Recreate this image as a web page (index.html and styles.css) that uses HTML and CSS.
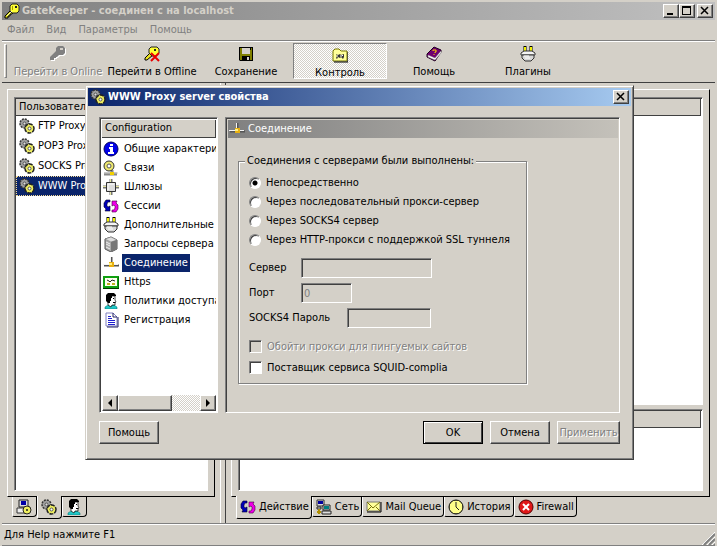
FILE: index.html
```html
<!DOCTYPE html>
<html lang="ru">
  <head>
    <meta charset="utf-8" />
    <title>GateKeeper</title>
    <link rel="stylesheet" href="styles.css">
  </head>
  <body>
    <!-- icons -->
    <svg class="sprite" aria-hidden="true">
      <symbol id="key" viewBox="0 0 16 16">
        <path d="M7 7L1 13v2h3v-2h2v-2h2l2-2z" fill="#dede18" stroke="#000" stroke-width="1"/>
        <path d="M8 1h5l2 2v5l-2 2H8L6 8V3z" fill="#ff3" stroke="#222" stroke-width="1"/>
        <path d="M8 8L3 13" stroke="#ffffb0" stroke-width="1"/>
        <path d="M11 3h2v2h-2z" fill="#222"/>
        <path d="M8.500 3v4M8 5h1" stroke="#a8a000" stroke-width="1"/>
      </symbol>
      <symbol id="key-off" viewBox="0 0 16 16">
        <path d="M9 1h5l2 2v5l-2 2h-4l-2 2H7v1H5v2H1v-3l6-6V3z" fill="#fff"/>
        <path d="M8 0h5l2 2v5l-2 2H9l-2 2H6v1H4v2H0v-3l6-6V2z" fill="#808080"/>
        <path d="M10 2h3v2h-3z" fill="#d4d0c8"/>
      </symbol>
      <symbol id="key-x" viewBox="0 0 16 16">
        <path d="M6 7L1 12v2h2l6-5z" fill="#e8e020" stroke="#000"/>
        <path d="M7 1h6l2 2v4l-3 3H8L5 7V3z" fill="#ff3" stroke="#222"/>
        <path d="M10 3h2v2h-2z" fill="#222"/>
        <path d="M7 7l8 8M15 7l-8 8" stroke="#e80000" stroke-width="2"/>
      </symbol>
      <symbol id="save" viewBox="0 0 16 16">
        <path d="M1 1h14v14H2l-1-1z" fill="#000"/>
        <path d="M2 2h2v6h8V4h1V2h1v12h-2v-4H4v4H2z" fill="#808000"/>
        <path d="M4 2h8v6H4zM9 11h2v3H9z" fill="#d4d0c8"/>
      </symbol>
      <symbol id="folder" viewBox="0 0 16 16">
        <path d="M1 14V4l2-2h4l2 2h6v10z" fill="#ff9" stroke="#777700"/>
        <path d="M2 15h14V5" fill="none" stroke="#000"/>
        <path d="M4 7l2 1 2-1 1 1 3-1v3l-1 2-2-2-1 1-2-1-1 2-1-1 1-2z" fill="#333"/>
        <path d="M8 9h2M5 9h1M10 8l1 1" stroke="#fff"/>
      </symbol>
      <symbol id="book" viewBox="0 0 16 16">
        <path d="M1 8L8 1l7 3v2l-6 9-8-4z" fill="#700070" stroke="#200020"/>
        <path d="M2 9l7 3 6-7v2l-6 7-7-3z" fill="#fff" stroke="#888" stroke-width=".5"/>
        <path d="M7 5V4h3v2H9v1M8 8v1" fill="none" stroke="#ffcf00"/>
      </symbol>
      <symbol id="plug" viewBox="0 0 16 16">
        <path d="M5 0v7M11 0v7" stroke="#000" stroke-width="3"/>
        <path d="M5 1v5M11 1v5" stroke="#f0f000" stroke-width="2"/>
        <path d="M1 7l3-2h8l3 2v2H1z" fill="#f4f4f4" stroke="#333"/>
        <path d="M2 9h12v3l-3 3H5l-3-3z" fill="#d8d8d8" stroke="#333"/>
        <path d="M4 10h5M5 12h5" stroke="#fff"/>
      </symbol>
      <symbol id="gears" viewBox="0 0 16 16">
        <circle cx="5.500" cy="5.500" r="4.500" fill="#a0a0a0" stroke="#333" stroke-width="1.500" stroke-dasharray="2 1"/>
        <circle cx="5.500" cy="5.500" r="1.500" fill="#ddd" stroke="#555"/>
        <circle cx="10.500" cy="10.500" r="4.500" fill="#eeee60" stroke="#222" stroke-width="1.500" stroke-dasharray="4 1"/>
        <circle cx="10.500" cy="10.500" r="1.500" fill="#fff" stroke="#555"/>
      </symbol>
      <symbol id="info" viewBox="0 0 16 16">
        <circle cx="8" cy="8" r="7" fill="#0000e8" stroke="#000060"/>
        <path d="M7 3h3v2H7zM6 6h4v5h1v2H5v-2h2V8H6z" fill="#fff"/>
      </symbol>
      <symbol id="links" viewBox="0 0 16 16">
        <path d="M1 14h13M9 10v3" stroke="#888" stroke-width="3"/>
        <path d="M1 13h14" stroke="#ccc"/>
        <circle cx="6" cy="6" r="5" fill="#eee870" stroke="#333"/>
        <circle cx="6" cy="6" r="2" fill="#fff" stroke="#555"/>
        <path d="M7 12h4v3H7z" fill="#f2d000"/>
      </symbol>
      <symbol id="gateway" viewBox="0 0 16 16">
        <path d="M8 0v16" stroke="#777" stroke-width="3"/>
        <path d="M0 8h16" stroke="#777" stroke-width="3"/>
        <path d="M7.500 0v16M0 7.500h16" stroke="#e8e8a0"/>
        <path d="M3.500 3.500h9v9h-9z" fill="#ddd" stroke="#333"/>
        <path d="M5 11V5h6" fill="none" stroke="#fff"/>
      </symbol>
      <symbol id="sessions" viewBox="0 0 16 16">
        <path d="M7 2H3L1 5v4l2 2-1 2h5V8L5 9 4 8V6l1-2h2z" fill="#0000b8" stroke="#000028" stroke-width=".6"/>
        <path d="M9 14h4l2-3V7l-2-2 1-2H9v5l2-1 1 1v2l-1 2H9z" fill="#f000e8" stroke="#400040" stroke-width=".6"/>
      </symbol>
      <symbol id="server" viewBox="0 0 16 16">
        <path d="M2 3l6-2 6 3v9l-6 3-6-3z" fill="#aaa" stroke="#555"/>
        <path d="M2 3l6-2 6 3-6 2z" fill="#ddd" stroke="#777" stroke-width=".5"/>
        <path d="M8 6l6-2v9l-6 3z" fill="#777"/>
        <path d="M3 6l4 2M3 8l4 2M3 11l4 2" stroke="#eee"/>
      </symbol>
      <symbol id="wire" viewBox="0 0 16 16">
        <path d="M8.500 2v8M1 10.500h15" stroke="#555" stroke-width="2"/>
        <path d="M7.500 2v8M0 9.500h15" stroke="#f4f4f4"/>
        <path d="M6 7h5v5H6z" fill="#e8b010"/>
        <path d="M6 8h3v2H6z" fill="#fff080"/>
      </symbol>
      <symbol id="cert" viewBox="0 0 16 16">
        <path d="M1 3h14v10H1z" fill="#fffff0" stroke="#10a010" stroke-width="2"/>
        <path d="M0 14.500h16V3" fill="none" stroke="#003800"/>
        <path d="M4 6l2 1 1 1 2-2 3 1" fill="none" stroke="#222"/>
        <path d="M4 10h3M9 10h3" stroke="#c0b020" stroke-width="2"/>
      </symbol>
      <symbol id="person" viewBox="0 0 16 16">
        <path d="M2 16v-2l3-2h6l3 2v2z" fill="#20c8c8" stroke="#066" stroke-width=".5"/>
        <path d="M5 3h7v4l1 2-1 1v2H9l-1 2-3-2z" fill="#fff" stroke="#000" stroke-width=".7"/>
        <path d="M3 2l2-2h6l2 2v1H9v2H8v3H7v2H5L3 8z" fill="#000"/>
        <path d="M10 5h1v1h-1zM10 9h2v1h-2z" fill="#000"/>
      </symbol>
      <symbol id="doc" viewBox="0 0 16 16">
        <path d="M3 1h7l4 4v9H3z" fill="#fff" stroke="#8080c0"/>
        <path d="M10 1v4h4M4 15h11V5" fill="none" stroke="#202060"/>
        <path d="M5 4.500h3M5 6.500h4M5 8.500h7M5 10.500h7M5 12.500h7" stroke="#2020d0"/>
      </symbol>
      <symbol id="pcgear" viewBox="0 0 16 16">
        <path d="M3 1h9v7H3z" fill="#ddd" stroke="#222"/>
        <path d="M5 2h5v4H5z" fill="#0000a8"/>
        <path d="M1 9h9v5H1z" fill="#eee" stroke="#333"/>
        <circle cx="11" cy="11" r="4" fill="#eeee60" stroke="#222"/>
        <circle cx="11" cy="11" r="1" fill="#222"/>
      </symbol>
      <symbol id="net" viewBox="0 0 16 16">
        <path d="M1 1h7v6H1z" fill="#ddd" stroke="#333"/>
        <path d="M2 2h5v3H2z" fill="#0000a0"/>
        <path d="M7 6h7v5H7z" fill="#ddd" stroke="#222"/>
        <path d="M8 7h5v3H8z" fill="#008080"/>
        <path d="M6 12h9v3H6zM1 8h4v2H1z" fill="#ddd" stroke="#222"/>
        <path d="M3 10v5M1 13h4" stroke="#b09000" stroke-width="2"/>
      </symbol>
      <symbol id="mail" viewBox="0 0 16 16">
        <path d="M1 3h13v9H1z" fill="#ff9" stroke="#777"/>
        <path d="M1 3l6 6 7-6M1 12l4-4M14 12l-4-4" fill="none" stroke="#77700a"/>
        <path d="M1 13h14V3" fill="none" stroke="#000"/>
      </symbol>
      <symbol id="clock" viewBox="0 0 16 16">
        <circle cx="8" cy="8" r="7" fill="#ff8" stroke="#000"/>
        <path d="M8 3v5l3 3M8 1v1M8 14v1M1 8h1M14 8h1" fill="none" stroke="#222"/>
      </symbol>
      <symbol id="stop" viewBox="0 0 16 16">
        <circle cx="8" cy="8" r="7" fill="#e01818" stroke="#500"/>
        <path d="M5 5l6 6M11 5l-6 6" stroke="#fff" stroke-width="2"/>
      </symbol>
      <symbol id="close" viewBox="0 0 10 10">
        <path d="M1 1l7 7M8 1l-7 7" stroke="#000" stroke-width="1.500"/>
      </symbol>
    </svg>

    <div class="window">
      <div class="titlebar">
        <svg class="icon"><use href="#key"/></svg>
        <span class="title">GateKeeper - соединен с на localhost</span>
        <button class="caption" aria-label="Свернуть"><svg viewBox="0 0 10 10"><path d="M1 7h6v2H1z"/></svg></button>
        <button class="caption" aria-label="Развернуть"><svg viewBox="0 0 10 10"><path d="M0 0h9v9H0zM1 2v6h7V2z" fill-rule="evenodd"/></svg></button>
        <button class="caption caption-close" aria-label="Закрыть"><svg><use href="#close"/></svg></button>
      </div>

      <nav class="menu">
        <button>Файл</button>
        <button>Вид</button>
        <button>Параметры</button>
        <button>Помощь</button>
      </nav>

      <div class="toolbar">
        <div class="grip"></div>
        <button class="tool" disabled><svg class="icon"><use href="#key-off"/></svg>Перейти в Online</button>
        <button class="tool"><svg class="icon"><use href="#key-x"/></svg>Перейти в Offline</button>
        <button class="tool"><svg class="icon"><use href="#save"/></svg>Сохранение</button>
        <button class="tool pressed"><svg class="icon"><use href="#folder"/></svg>Контроль</button>
        <button class="tool"><svg class="icon"><use href="#book"/></svg>Помощь</button>
        <button class="tool"><svg class="icon"><use href="#plug"/></svg>Плагины</button>
      </div>

      <main class="work">
        <section class="side">
          <div class="frame">
            <div class="list">
              <div class="list-head">Пользователи</div>
              <ul class="users">
                <li><svg class="icon"><use href="#gears"/></svg><span>FTP Proxy</span></li>
                <li><svg class="icon"><use href="#gears"/></svg><span>POP3 Proxy</span></li>
                <li><svg class="icon"><use href="#gears"/></svg><span>SOCKS Proxy</span></li>
                <li class="selected"><svg class="icon"><use href="#gears"/></svg><span>WWW Proxy</span></li>
              </ul>
            </div>
          </div>
          <div class="tabs">
            <button class="tab" aria-label="Компьютеры"><svg class="icon"><use href="#pcgear"/></svg></button>
            <button class="tab active" aria-label="Сервисы"><svg class="icon"><use href="#gears"/></svg></button>
            <button class="tab" aria-label="Пользователи"><svg class="icon"><use href="#person"/></svg></button>
          </div>
        </section>

        <div class="splitter"></div>

        <section class="content">
          <div class="frame">
            <div class="list list-top"><div class="list-head"></div></div>
            <div class="list list-bottom"><div class="list-head"></div></div>
          </div>
          <div class="tabs">
            <button class="tab active"><svg class="icon"><use href="#sessions"/></svg>Действие</button>
            <button class="tab"><svg class="icon"><use href="#net"/></svg>Сеть</button>
            <button class="tab"><svg class="icon"><use href="#mail"/></svg>Mail Queue</button>
            <button class="tab"><svg class="icon"><use href="#clock"/></svg>История</button>
            <button class="tab"><svg class="icon"><use href="#stop"/></svg>Firewall</button>
          </div>
        </section>
      </main>

      <footer class="status">
        <span>Для Help нажмите F1</span>
        <svg class="resize" viewBox="0 0 13 13">
          <path d="M0 13L13 0M5 13l8-8M10 13l3-3" stroke="#fff"/>
          <path d="M2 13L13 2M7 13l6-6M12 13l1-1" stroke="#808080" stroke-width="2"/>
        </svg>
      </footer>
    </div>

    <!-- properties dialog -->
    <form class="dialog" role="dialog" aria-labelledby="dialog-title">
      <div class="dialog-title">
        <svg class="icon"><use href="#gears"/></svg>
        <span class="title" id="dialog-title">WWW Proxy server свойства</span>
        <button type="button" class="caption" aria-label="Закрыть"><svg><use href="#close"/></svg></button>
      </div>

      <div class="dialog-body">
        <div class="config">
          <div class="list-head">Configuration</div>
          <ul class="pages">
            <li><svg class="icon"><use href="#info"/></svg><span>Общие характеристики</span></li>
            <li><svg class="icon"><use href="#links"/></svg><span>Связи</span></li>
            <li><svg class="icon"><use href="#gateway"/></svg><span>Шлюзы</span></li>
            <li><svg class="icon"><use href="#sessions"/></svg><span>Сессии</span></li>
            <li><svg class="icon"><use href="#plug"/></svg><span>Дополнительные настройки</span></li>
            <li><svg class="icon"><use href="#server"/></svg><span>Запросы сервера</span></li>
            <li class="selected"><svg class="icon"><use href="#wire"/></svg><span>Соединение</span></li>
            <li><svg class="icon"><use href="#cert"/></svg><span>Https</span></li>
            <li><svg class="icon"><use href="#person"/></svg><span>Политики доступа</span></li>
            <li><svg class="icon"><use href="#doc"/></svg><span>Регистрация</span></li>
          </ul>
          <div class="scrollbar">
            <button type="button" aria-label="Влево"><svg viewBox="0 0 8 8"><path d="M6 0v8L2 4z"/></svg></button>
            <div class="thumb"></div>
            <div class="track"></div>
            <button type="button" aria-label="Вправо"><svg viewBox="0 0 8 8"><path d="M2 0v8l4-4z"/></svg></button>
          </div>
        </div>

        <div class="page">
          <div class="page-head"><svg class="icon"><use href="#wire"/></svg>Соединение</div>
          <fieldset class="group">
            <legend>Соединения с серверами были выполнены:</legend>
            <label class="choice"><input type="radio" name="mode" checked />Непосредственно</label>
            <label class="choice"><input type="radio" name="mode" />Через последовательный прокси-сервер</label>
            <label class="choice"><input type="radio" name="mode" />Через SOCKS4 сервер</label>
            <label class="choice"><input type="radio" name="mode" />Через HTTP-прокси с поддержкой SSL туннеля</label>
            <div class="fields">
              <div class="field"><label for="server-name">Сервер</label><input type="text" id="server-name" class="wide" disabled /></div>
              <div class="field"><label for="port">Порт</label><input type="text" id="port" class="short" value="0" disabled /></div>
              <div class="field field-pass"><label for="pass">SOCKS4 Пароль</label><input type="text" id="pass" class="medium" disabled /></div>
            </div>
            <label class="check disabled"><input type="checkbox" disabled />Обойти прокси для пингуемых сайтов</label>
            <label class="check"><input type="checkbox" />Поставщик сервиса SQUID-complia</label>
          </fieldset>
        </div>
      </div>

      <div class="actions">
        <button type="button" class="btn help">Помощь</button>
        <button type="button" class="btn default">OK</button>
        <button type="button" class="btn">Отмена</button>
        <button type="button" class="btn apply" disabled>Применить</button>
      </div>
    </form>
  </body>
</html>
```
FILE: styles.css
```css
* {
  box-sizing: border-box;
}
body {
  margin: 0;
  background-color: #d4d0c8;
  color: #000;
  font: 11px/14px "DejaVu Sans Condensed", Tahoma, "DejaVu Sans", sans-serif;
}
button,
input {
  font: inherit;
  color: inherit;
  padding: 0;
  margin: 0;
}
ul {
  list-style: none;
  margin: 0;
  padding: 0;
}
.sprite {
  display: none;
}
.icon {
  width: 16px;
  height: 16px;
  flex: none;
}

/* main window */
.window {
  display: flex;
  flex-direction: column;
  height: 100vh;
  padding: 2px 2px 0;
  overflow: hidden;
}
.titlebar {
  display: flex;
  align-items: center;
  height: 18px;
  padding: 0 2px;
  background: linear-gradient(to right, #808080, #c0c0c0);
  color: #d4d0c8;
}
.title {
  flex: 1;
  padding-left: 2px;
  font-weight: bold;
  white-space: nowrap;
}
.caption {
  display: flex;
  align-items: center;
  justify-content: center;
  width: 16px;
  height: 14px;
  background-color: #d4d0c8;
  border: 1px solid;
  border-color: #fff #404040 #404040 #fff;
  box-shadow: inset -1px -1px 0 #808080;
}
.caption svg {
  width: 10px;
  height: 10px;
}
.caption-close {
  margin-left: 2px;
}
.menu {
  display: flex;
  gap: 12px;
  height: 20px;
  padding: 0 5px;
}
.menu button {
  border: 0;
  background: none;
  color: #808080;
}
.toolbar {
  display: flex;
  height: 43px;
  padding: 2px 0 3px 2px;
  border-top: 1px solid #808080;
  border-bottom: 1px solid #404040;
  box-shadow: inset 0 1px 0 #fff;
}
.grip {
  width: 3px;
  margin: 1px 4px 1px 0;
  border: 1px solid;
  border-color: #fff #808080 #808080 #fff;
}
.tool {
  display: flex;
  flex-direction: column;
  align-items: center;
  gap: 3px;
  width: 94px;
  padding: 2px 0 0;
  border: 1px solid transparent;
  background: none;
  white-space: nowrap;
}
.tool:disabled {
  color: #808080;
  text-shadow: 1px 1px 0 #fff;
}
/* checked button: dithered face */
.tool.pressed {
  padding-top: 3px;
  border-color: #808080 #fff #fff #808080;
  background: repeating-conic-gradient(#fff 0 25%, #d4d0c8 0 50%) 0 0 / 2px 2px;
}

/* panes */
.work {
  display: flex;
  flex: 1;
  min-height: 0;
  border-bottom: 1px solid #808080;
}
.side,
.content {
  display: flex;
  flex-direction: column;
  padding: 6px 5px 4px;
}
.side {
  width: 218px;
}
.content {
  flex: 1;
  min-width: 0;
}
.splitter {
  width: 6px;
  border-left: 1px solid #fff;
  border-right: 1px solid #404040;
}
.frame {
  display: flex;
  flex-direction: column;
  flex: 1;
  gap: 4px;
  padding: 7px 6px 5px;
  border: 1px solid;
  border-color: #fff #000 #000 #fff;
}
.list {
  flex: 1;
  overflow: hidden;
  background-color: #fff;
  border: 1px solid;
  border-color: #808080 #fff #fff #808080;
  box-shadow: inset 1px 1px 0 #404040;
  padding: 1px;
}
.list-bottom {
  flex: 0 0 82px;
}
.list-head {
  height: 17px;
  padding: 0 3px;
  line-height: 16px;
  background-color: #d4d0c8;
  border-right: 1px solid #404040;
  border-bottom: 1px solid #404040;
}
.users li {
  display: flex;
  align-items: center;
  gap: 3px;
  height: 20px;
  padding-left: 3px;
  white-space: nowrap;
}
.selected {
  color: #fff;
}
.users .selected {
  background-color: #0a246a;
  outline: 1px dotted #f5db95;
  outline-offset: -1px;
}
.tabs {
  display: flex;
  align-items: flex-start;
  height: 22px;
  padding-left: 5px;
}
.tab {
  display: flex;
  align-items: center;
  gap: 3px;
  height: 20px;
  padding: 0 2px 0 3px;
  background-color: #d4d0c8;
  border: 1px solid #000;
  border-top: 0;
  border-left-color: #fff;
  border-radius: 0 0 4px 2px;
  white-space: nowrap;
}
.tab.active {
  height: 23px;
  margin-top: -1px;
}
.side .tab {
  padding-right: 4px;
}
.status {
  display: flex;
  justify-content: space-between;
  align-items: center;
  height: 22px;
  padding-left: 2px;
  border-top: 1px solid #fff;
  border-bottom: 1px solid #808080;
}
.resize {
  align-self: flex-end;
  width: 13px;
  height: 13px;
}

/* dialog lies over the window */
.dialog {
  position: absolute;
  left: 85px;
  top: 85px;
  width: 549px;
  padding: 2px;
  background-color: #d4d0c8;
  border: 1px solid;
  border-color: #d4d0c8 #404040 #404040 #d4d0c8;
  box-shadow: inset 1px 1px 0 #fff, inset -1px -1px 0 #808080;
}
.dialog-title {
  display: flex;
  align-items: center;
  height: 18px;
  padding: 0 2px;
  background: linear-gradient(to right, #0a246a, #a6caf0);
  color: #fff;
}
.dialog-body {
  display: flex;
  gap: 7px;
  height: 296px;
  margin: 11px 11px 0;
}
.config,
.page {
  display: flex;
  flex-direction: column;
  border: 1px solid;
  border-color: #808080 #fff #fff #808080;
  box-shadow: inset 1px 1px 0 #404040;
  padding: 2px 1px 1px 2px;
}
.config {
  width: 119px;
  background-color: #fff;
}
.pages {
  flex: 1;
  overflow: hidden;
  padding-top: 1px;
}
.pages li {
  display: flex;
  align-items: center;
  gap: 3px;
  height: 19px;
  padding-left: 1px;
  white-space: nowrap;
}
.pages span {
  padding: 2px;
}
.pages .selected span {
  background-color: #0a246a;
}
.config .list-head {
  height: 18px;
}
.scrollbar {
  display: flex;
  height: 16px;
}
.scrollbar button,
.thumb {
  display: flex;
  align-items: center;
  justify-content: center;
  width: 16px;
  background-color: #d4d0c8;
  border: 1px solid;
  border-color: #fff #404040 #404040 #fff;
  box-shadow: inset -1px -1px 0 #808080;
}
.scrollbar svg {
  width: 8px;
  height: 8px;
}
.scrollbar .thumb {
  width: 54px;
}
.track {
  flex: 1;
  background: repeating-conic-gradient(#fff 0 25%, #d4d0c8 0 50%) 0 0 / 2px 2px;
}
.page {
  flex: 1;
}
.page-head {
  display: flex;
  align-items: center;
  gap: 3px;
  height: 18px;
  padding-left: 1px;
  background: linear-gradient(to right, #808080, #c4c1ba);
  color: #fff;
}
.group {
  width: 289px;
  margin: 16px 0 0 10px;
  padding: 5px 10px 5px;
  border: 1px solid #808080;
  box-shadow: 1px 1px 0 #fff, inset 1px 1px 0 #fff;
}
.group legend {
  margin-left: -4px;
  padding: 0 2px;
  background-color: #d4d0c8;
  white-space: nowrap;
}
.choice,
.check {
  display: flex;
  align-items: center;
  gap: 5px;
  white-space: nowrap;
}
.choice {
  height: 19px;
}
.choice input,
.check input {
  appearance: none;
  flex: none;
  background-color: #fff;
  border: 1px solid;
  border-color: #808080 #fff #fff #808080;
  box-shadow: inset 1px 1px 0 #404040;
}
.choice input {
  width: 12px;
  height: 12px;
  border-radius: 50%;
}
.choice input:checked {
  background-image: radial-gradient(circle, #000 0 2px, #fff 3px);
}
.check {
  height: 21px;
}
.check input {
  width: 13px;
  height: 13px;
}
.check.disabled {
  color: #808080;
  text-shadow: 1px 1px 0 #fff;
}
.check input:disabled {
  background-color: #d4d0c8;
}
.fields {
  display: flex;
  flex-direction: column;
  gap: 5px;
  margin: 9px 0 8px;
}
.field {
  display: flex;
  align-items: center;
}
.field label {
  width: 52px;
}
.field-pass label {
  width: 98px;
}
.field input {
  height: 20px;
  padding: 0 2px;
  background-color: #d4d0c8;
  color: #808080;
  border: 1px solid;
  border-color: #808080 #fff #fff #808080;
  box-shadow: inset 1px 1px 0 #404040;
}
.wide {
  width: 131px;
}
.short {
  width: 51px;
}
.medium {
  width: 84px;
}
.actions {
  display: flex;
  gap: 7px;
  padding: 8px 11px 13px;
}
.btn {
  width: 60px;
  height: 23px;
  background-color: #d4d0c8;
  border: 1px solid;
  border-color: #fff #404040 #404040 #fff;
  box-shadow: inset -1px -1px 0 #808080;
  white-space: nowrap;
}
.help {
  margin-right: auto;
}
.default {
  border-color: #000;
  box-shadow: inset 1px 1px 0 #fff, inset -1px -1px 0 #404040;
}
.apply {
  width: 63px;
}
.btn:disabled {
  color: #808080;
  text-shadow: 1px 1px 0 #fff;
}
```
